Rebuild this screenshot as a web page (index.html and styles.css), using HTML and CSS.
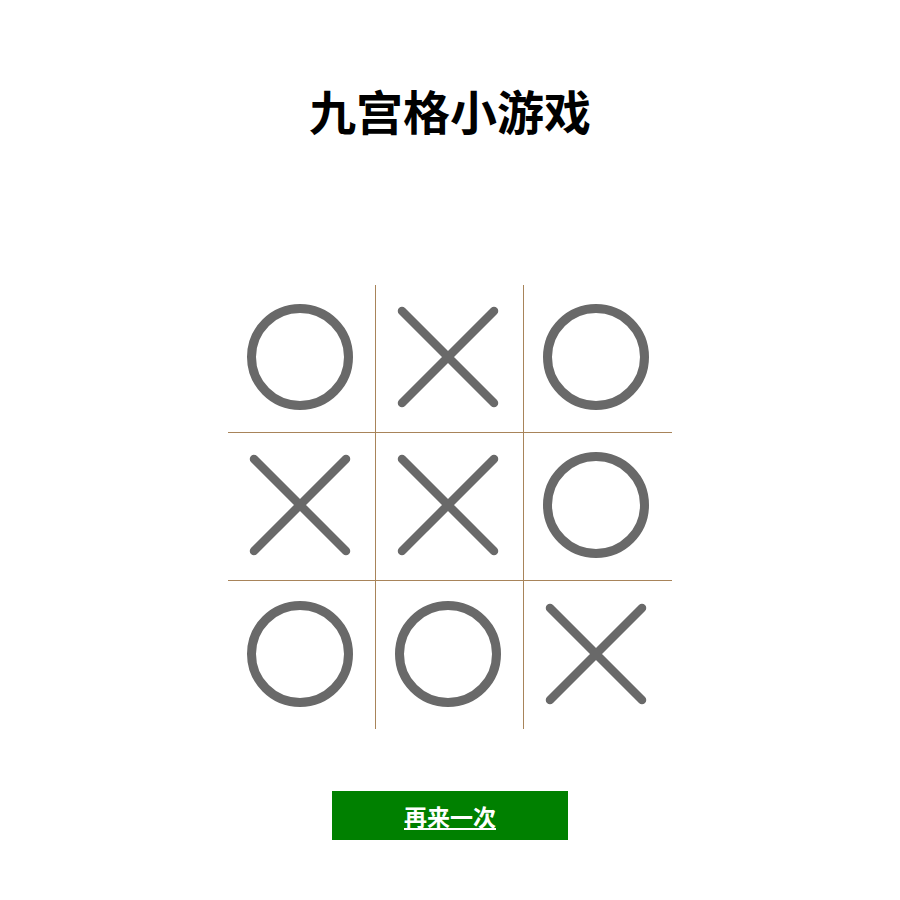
FILE: index.html
```html
<!DOCTYPE html>
<html lang="zh-CN">
<head>
    <meta charset="UTF-8">
    <meta name="viewport" content="width=device-width, initial-scale=1.0">
    <title>九宫格小游戏</title>
    <link rel="stylesheet" href="styles.css">
</head>
<body>
    <div class="game">
        <h1 class="title">九宫格小游戏</h1>

        <div class="board" id="board"></div>

        <button class="restart" id="restart">再来一次</button>
    </div>

    <script>
        const board = document.getElementById('board');
        const start = ['O', 'X', 'O', 'X', 'X', 'O', 'O', 'O', 'X'];

        const circle = '<svg viewBox="0 0 110 110" width="110" height="110"><circle cx="55" cy="55" r="48.5" fill="none" stroke="#696969" stroke-width="9"/></svg>';
        const cross = '<svg viewBox="0 0 110 110" width="110" height="110"><path d="M9 9 L101 101 M101 9 L9 101" stroke="#696969" stroke-width="8.5" stroke-linecap="round"/></svg>';

        function render(marks) {
            board.innerHTML = '';
            marks.forEach(mark => {
                const cell = document.createElement('div');
                cell.className = 'cell';
                if (mark === 'O') cell.innerHTML = circle;
                if (mark === 'X') cell.innerHTML = cross;
                board.appendChild(cell);
            });
        }

        render(start);

        document.getElementById('restart').addEventListener('click', function() {
            render(['', '', '', '', '', '', '', '', '']);
        });
    </script>
</body>
</html>
```

FILE: styles.css
```css
body {
    margin: 0;
    background-color: #fff;
    font-family: "Noto Sans CJK SC", "Noto Sans", sans-serif;
    color: #000;
}
.game {
    display: flex;
    flex-direction: column;
    align-items: center;
}
.title {
    margin: 72px 0 0;
    font-size: 47px;
    font-weight: 700;
    line-height: 76px;
}
.board {
    display: grid;
    grid-template-columns: repeat(3, 148px);
    grid-template-rows: repeat(3, 148px);
    margin-top: 137px;
}
.cell {
    display: flex;
    justify-content: center;
    align-items: center;
    padding: 0 4px 3px 0;
    border-right: 1px solid #a8845a;
    border-bottom: 1px solid #a8845a;
}
.cell:nth-child(3n) {
    border-right: none;
}
.cell:nth-child(n+7) {
    border-bottom: none;
}
.restart {
    margin-top: 62px;
    width: 236px;
    height: 49px;
    border: none;
    background: #008000;
    color: #fff;
    font-family: "Noto Sans CJK SC", sans-serif;
    font-size: 23px;
    font-weight: 700;
    text-decoration: underline;
    cursor: pointer;
}
```
